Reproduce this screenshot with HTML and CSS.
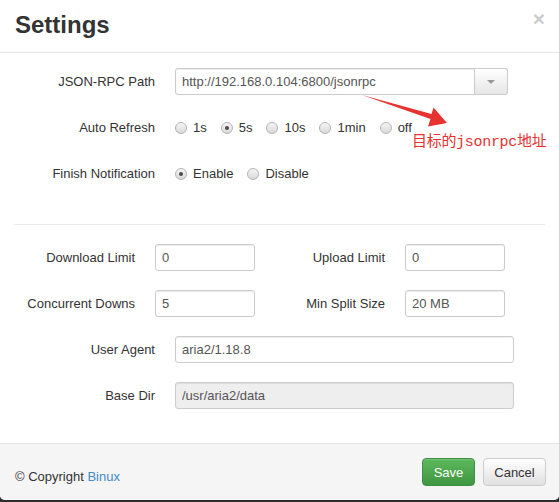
FILE: index.html
```html
<!DOCTYPE html>
<html>
<head>
<meta charset="utf-8">
<link rel="stylesheet" href="styles.css">
</head>
<body>
<div class="modal">
  <div class="modal-header">
    <h3 class="title">Settings</h3>
    <span class="close">×</span>
  </div>
  <div class="modal-body">
    <div class="section">
      <div class="row">
        <span class="lbl">JSON-RPC Path</span>
        <div class="input-group">
          <input class="input input-left" value="http://192.168.0.104:6800/jsonrpc">
          <span class="dd"><span class="caret"></span></span>
        </div>
      </div>
      <div class="row">
        <span class="lbl">Auto Refresh</span>
        <div class="radios">
          <span class="opt"><span class="radio"></span>1s</span>
          <span class="opt"><span class="radio on"></span>5s</span>
          <span class="opt"><span class="radio"></span>10s</span>
          <span class="opt"><span class="radio"></span>1min</span>
          <span class="opt"><span class="radio"></span>off</span>
        </div>
      </div>
      <div class="row">
        <span class="lbl">Finish Notification</span>
        <div class="radios">
          <span class="opt"><span class="radio on"></span>Enable</span>
          <span class="opt"><span class="radio"></span>Disable</span>
        </div>
      </div>
    </div>
    <hr class="divider">
    <div class="section">
      <div class="row">
        <div class="half">
          <span class="lbl lbl-s">Download Limit</span>
          <input class="input input-s" value="0">
        </div>
        <div class="half">
          <span class="lbl lbl-s">Upload Limit</span>
          <input class="input input-s" value="0">
        </div>
      </div>
      <div class="row">
        <div class="half">
          <span class="lbl lbl-s">Concurrent Downs</span>
          <input class="input input-s" value="5">
        </div>
        <div class="half">
          <span class="lbl lbl-s">Min Split Size</span>
          <input class="input input-s" value="20 MB">
        </div>
      </div>
      <div class="row">
        <span class="lbl">User Agent</span>
        <input class="input input-wide" value="aria2/1.18.8">
      </div>
      <div class="row">
        <span class="lbl">Base Dir</span>
        <input class="input input-wide disabled" value="/usr/aria2/data" disabled>
      </div>
    </div>
  </div>
  <div class="footer">
    <div class="copy">© Copyright <a class="link">Binux</a></div>
    <div class="spacer"></div>
    <button class="btn btn-save">Save</button>
    <button class="btn btn-cancel">Cancel</button>
  </div>

  <svg class="arrow" width="559" height="500" viewBox="0 0 559 500">
    <polygon points="362,95 431.5,114 433.5,107.5 447,123 428,126.5 430.5,119" fill="#e8322f"/>
  </svg>
  <div class="note">目标的jsonrpc地址</div>
</div>
</body>
</html>
```

FILE: styles.css
```css
* { box-sizing: border-box; }

body {
  margin: 0;
  background: #2e2e2e;
  font-family: "Liberation Sans", Arial, sans-serif;
  font-size: 13px;
  color: #333;
}

.modal {
  position: relative;
  width: 559px;
  height: 500px;
  background: #fff;
  border-radius: 0 0 5px 5px;
  display: flex;
  flex-direction: column;
  overflow: hidden;
}

.modal-header {
  height: 53px;
  flex: none;
  padding: 12px 14px 0 15px;
  border-bottom: 1px solid #e5e5e5;
  display: flex;
  justify-content: space-between;
  align-items: flex-start;
}

.title {
  margin: 0;
  font-size: 24px;
  line-height: 26px;
  font-weight: bold;
  color: #333;
}

.close {
  font-size: 21px;
  font-weight: bold;
  line-height: 1;
  color: #000;
  opacity: 0.2;
  margin-top: -4px;
}

.modal-body {
  flex: 1;
  padding: 15px 15px 0;
}

.row {
  display: flex;
  align-items: center;
  height: 27px;
  margin-bottom: 19px;
}

.section .row:last-child { margin-bottom: 0; }

.lbl {
  width: 140px;
  flex: none;
  text-align: right;
  margin-right: 20px;
  color: #333;
}

.lbl-s { width: 120px; }

.half {
  width: 250px;
  display: flex;
  align-items: center;
}

.input {
  height: 27px;
  border: 1px solid #ccc;
  border-radius: 3px;
  padding: 0 6px;
  font: inherit;
  color: #555;
  background: #fff;
  box-shadow: inset 0 1px 1px rgba(0, 0, 0, 0.075);
  outline: none;
}

.input-s { width: 100px; }
.input-wide { width: 339px; }
.disabled { background: #eee; color: #555; }

.input-group {
  display: flex;
  width: 333px;
  height: 27px;
}

.input-left {
  flex: 1;
  min-width: 0;
  border-radius: 3px 0 0 3px;
}

.dd {
  width: 33px;
  height: 27px;
  border: 1px solid #ccc;
  border-left: 0;
  border-radius: 0 3px 3px 0;
  background: linear-gradient(#fff, #e6e6e6);
  display: flex;
  align-items: center;
  justify-content: center;
}

.caret {
  width: 0;
  height: 0;
  border-left: 4px solid transparent;
  border-right: 4px solid transparent;
  border-top: 4px solid #999;
}

.radios {
  display: flex;
  align-items: center;
}

.opt {
  display: flex;
  align-items: center;
  margin-right: 14px;
}

.radio {
  width: 12px;
  height: 12px;
  border-radius: 50%;
  border: 1px solid #b5b5b5;
  background: linear-gradient(#f5f5f5, #d9d9d9);
  margin-right: 6px;
  position: relative;
}

.radio.on::after {
  content: "";
  position: absolute;
  left: 3px;
  top: 3px;
  width: 4px;
  height: 4px;
  border-radius: 50%;
  background: #4a4a4a;
}

.divider {
  border: 0;
  border-top: 1px solid #eaeaea;
  margin: 37px -1px 19px;
  height: 0;
}

.footer {
  height: 57px;
  flex: none;
  border-top: 1px solid #e5e5e5;
  background: #f5f5f5;
  padding: 14px 13px 0 15px;
  display: flex;
  align-items: flex-start;
}

.copy {
  line-height: 18px;
  margin-top: 10px;
}

.link { color: #428bca; text-decoration: none; }

.spacer { flex: 1; }

.btn {
  height: 28px;
  padding: 0 10px;
  font: inherit;
  border-radius: 4px;
  border: 1px solid #ccc;
  cursor: pointer;
}

.btn-save {
  width: 53px;
  color: #fff;
  background: linear-gradient(#5cb85c, #419641);
  border-color: #3e8f3e;
  box-shadow: inset 0 1px 0 rgba(255, 255, 255, 0.15);
}

.btn-cancel {
  width: 63px;
  margin-left: 8px;
  color: #333;
  background: linear-gradient(#fff, #e0e0e0);
  border-color: #ccc;
}

.arrow {
  position: absolute;
  left: 0;
  top: 0;
  pointer-events: none;
}

.note {
  position: absolute;
  left: 412px;
  top: 134px;
  font-family: "Liberation Mono", "Noto Sans CJK SC", monospace;
  font-size: 15px;
  letter-spacing: -0.3px;
  line-height: 18px;
  color: #e8322f;
  white-space: nowrap;
}
```
